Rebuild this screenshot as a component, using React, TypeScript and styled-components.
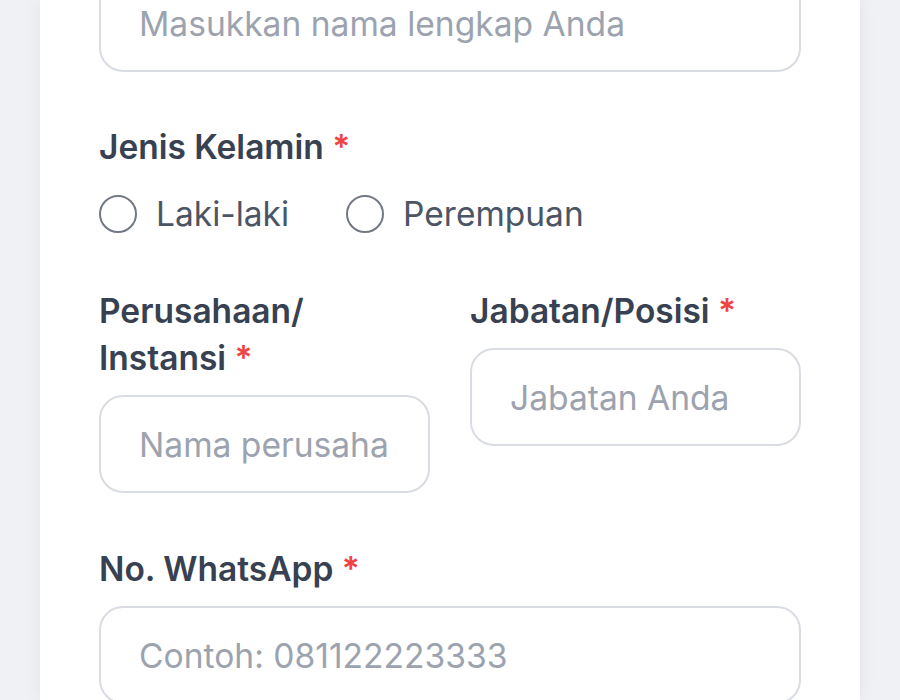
import styled, { createGlobalStyle } from 'styled-components'

const Global = createGlobalStyle`
  html, body {
    margin: 0;
    padding: 0;
    background: #f0f1f4;
    font-family: 'Inter', 'Liberation Sans', sans-serif;
    height: 700px;
    overflow: hidden;
  }
  * { box-sizing: border-box; }
`

const Card = styled.div`
  margin: 0 40px;
  height: 700px;
  overflow: hidden;
  background: #ffffff;
  box-shadow: 0 0 18px rgba(17, 24, 39, 0.06);
  padding: 0 59px;
`

const Form = styled.form`
  display: flex;
  flex-direction: column;
  margin-top: -26px;
`

const Field = styled.div<{ gapTop?: number }>`
  display: flex;
  flex-direction: column;
  gap: 13px;
  margin-top: ${(p) => p.gapTop ?? 0}px;
`

const Label = styled.label`
  font-size: 33.5px;
  line-height: 47px;
  font-weight: 600;
  color: #374151;
`

const Req = styled.span`
  color: #ef4444;
`

const Input = styled.input`
  width: 100%;
  height: 98px;
  border: 2px solid #d9dce2;
  border-radius: 24px;
  padding: 0 38px;
  font-family: inherit;
  font-size: 33.6px;
  color: #111827;
  background: #fff;
  outline: none;
  &::placeholder {
    color: #9ca3af;
  }
`

const RadioRow = styled.div`
  display: flex;
  align-items: center;
  gap: 57px;
  height: 47px;
  margin-top: 19px;
`

const RadioOption = styled.label`
  display: flex;
  align-items: center;
  gap: 19px;
  font-size: 33.5px;
  color: #4b5563;
`

const RadioCircle = styled.input`
  appearance: none;
  margin: 0;
  width: 38px;
  height: 38px;
  border: 2px solid #727884;
  border-radius: 50%;
  background: #fff;
`

const Columns = styled.div`
  display: grid;
  grid-template-columns: 1fr 1fr;
  gap: 40px;
  margin-top: 51px;
  align-items: start;
`

export default function App() {
  return (
    <>
      <Global />
      <Card>
        <Form>
          <Input placeholder="Masukkan nama lengkap Anda" />

          <Field gapTop={52}>
            <Label>
              Jenis Kelamin <Req>*</Req>
            </Label>
          </Field>
          <RadioRow>
            <RadioOption>
              <RadioCircle type="radio" name="gender" />
              Laki-laki
            </RadioOption>
            <RadioOption>
              <RadioCircle type="radio" name="gender" />
              Perempuan
            </RadioOption>
          </RadioRow>

          <Columns>
            <Field>
              <Label>
                Perusahaan/ Instansi <Req>*</Req>
              </Label>
              <Input placeholder="Nama perusahaan" />
            </Field>
            <Field>
              <Label>
                Jabatan/Posisi <Req>*</Req>
              </Label>
              <Input placeholder="Jabatan Anda" />
            </Field>
          </Columns>

          <Field gapTop={53}>
            <Label>
              No. WhatsApp <Req>*</Req>
            </Label>
            <Input placeholder="Contoh: 081122223333" />
          </Field>
        </Form>
      </Card>
    </>
  )
}
